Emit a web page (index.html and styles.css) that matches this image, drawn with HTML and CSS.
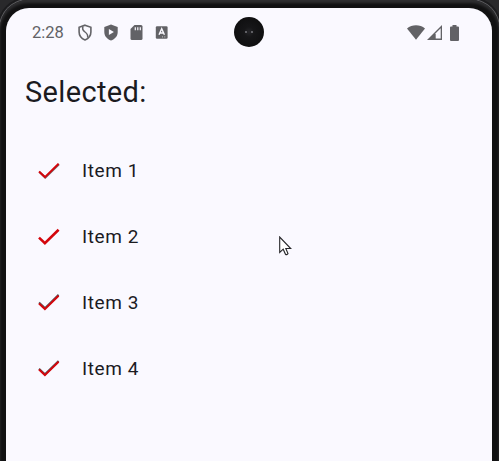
FILE: index.html
```html
<!DOCTYPE html>
<html lang="en">
<head>
<meta charset="utf-8">
<title>Selected</title>
<link rel="stylesheet" href="styles.css">
</head>
<body>
<div class="phone">
  <div class="screen">
    <header class="status">
      <span class="clock">2:28</span>
      <div class="notices">
        <svg width="14" height="17" viewBox="0 0 14 17"><path d="M7 1.200 12.900 3.300V8c0 3.600-2.400 6.500-5.900 7.900C3.500 14.500 1.100 11.600 1.100 8V3.300Z" fill="none" stroke="#646468" stroke-width="1.600"/><path d="M5 2.500C3.800 5.500 5 6.600 7 8s3.200 3 2.600 5.600" fill="none" stroke="#646468" stroke-width="1.500"/></svg>
        <svg width="14" height="17" viewBox="0 0 14 17"><path d="M7 .4 13.700 2.900V8c0 4.200-2.800 7.200-6.700 8.500C3.100 15.200.3 12.200.3 8V2.900Z" fill="#626266"/><path d="M4.900 4.900v6.200l5-3.100Z" fill="#faf9ff"/></svg>
        <svg width="13" height="15" viewBox="0 0 13 15"><path d="M4.500 0h6.500q1.500 0 1.500 1.500v12Q12.500 15 11 15H2Q.5 15 .5 13.500V4Z" fill="#626266"/><path d="M5.300 2.200v3M7.800 2.200v3M10.300 2.200v3" stroke="#faf9ff" stroke-width="1.200"/></svg>
        <svg width="13" height="13" viewBox="0 0 13 13"><rect x=".8" y=".2" width="11.800" height="12.500" rx="1.200" fill="#626266"/><path d="M4 8.700 6.700 2.800 9.400 8.700M5 7h3.400" fill="none" stroke="#faf9ff" stroke-width="1.400"/><path d="M7 10.900h1M9.300 10.900h1" stroke="#c8c8cc"/></svg>
      </div>
      <div class="system">
        <svg width="18" height="15" viewBox="0 0 18 15"><path d="M0 3.500C5-.9 13-.9 18 3.500L9 14.700Z" fill="#626266"/></svg>
        <svg width="15" height="15" viewBox="0 0 15 15"><path d="M0 15 15 0V15Z" fill="#626266"/><path d="M8.700 8.200 13.700 3.200V13.600h-5Z" fill="#faf9ff"/></svg>
        <svg class="battery" width="9" height="16" viewBox="0 0 9 16"><path d="M2.500 0h4v1.600H8q1 0 1 1V15q0 1-1 1H1q-1 0-1-1V2.600q0-1 1-1h1.500Z" fill="#626266"/></svg>
      </div>
      <div class="camera"><i></i><i></i></div>
    </header>
    <h1>Selected:</h1>
    <ul>
      <li><svg class="check" width="22" height="17" viewBox="0 0 22 17"><path d="m1 9.600 5.900 5.500L20.600 1.800" transform="translate(.4 .5)" stroke="#756a6e"/><path d="m1 9.600 5.900 5.500L20.600 1.800" stroke="#d4060c"/></svg><span>Item 1</span></li>
      <li><svg class="check bold" width="22" height="17" viewBox="0 0 22 17"><path d="m1 9.600 5.900 5.500L20.600 1.800" stroke="#d4060c"/></svg><span>Item 2</span></li>
      <li><svg class="check" width="22" height="17" viewBox="0 0 22 17"><path d="m1 9.600 5.900 5.500L20.600 1.800" transform="translate(0 -1)" stroke="#55575a"/><path d="m1 9.600 5.900 5.500L20.600 1.800" stroke="#d4060c"/></svg><span>Item 3</span></li>
      <li><svg class="check" width="22" height="17" viewBox="0 0 22 17"><path d="m1 9.600 5.900 5.500L20.600 1.800" transform="translate(0 -.8)" stroke="#55575a"/><path d="m1 9.600 5.900 5.500L20.600 1.800" stroke="#d4060c"/></svg><span>Item 4</span></li>
    </ul>
  </div>
</div>
<svg class="pointer" width="13" height="20" viewBox="0 0 13 20"><path d="M.7 1v15.500l3.500-3.300 2.300 5.100q1.200 1 2.500-.7L6.800 12.500h4.900Z" fill="#fff" stroke="#252528" stroke-width="1.100"/></svg>
</body>
</html>
```
FILE: styles.css
```css
* { box-sizing: border-box; }
body {
  margin: 0;
  height: 461px;
  overflow: hidden;
  background: #29292b;
  font-family: Roboto, sans-serif;
  color: #1b1b1f;
}
svg { display: block; flex: none; }
.phone {
  height: 461px;
  padding: 8px 7px 0 6px;
  background: #111112;
  border-radius: 28px 28px 0 0;
  box-shadow: 0 0 0 1px #5c5c5f, 0 0 0 3px #1c1c1e, inset 0 3px 3px #303032;
}
.screen {
  height: 453px;
  background: #faf9ff;
  border-radius: 23px 23px 0 0;
}
.status {
  position: relative;
  display: flex;
  align-items: center;
  height: 49px;
  padding: 0 33px 0 26px;
}
.clock {
  width: 45.5px;
  font-size: 16.5px;
  color: #626266;
}
.notices { display: flex; align-items: center; gap: 12.3px; }
.system { display: flex; align-items: center; gap: 2px; margin-left: auto; }
.battery { margin-left: 6px; }
.camera {
  position: absolute;
  left: 228px;
  top: 9px;
  width: 30px;
  height: 30px;
  display: flex;
  align-items: center;
  justify-content: center;
  gap: 4px;
  border-radius: 50%;
  background: radial-gradient(circle, #26262a 0, #161618 5px, #141416 8px, #101011 14px);
}
.camera i { width: 2px; height: 2px; border-radius: 50%; background: #77777c; }
h1 {
  margin: 10px 0 0 19px;
  font-size: 29px;
  line-height: 50px;
  font-weight: 400;
  letter-spacing: .35px;
}
ul { list-style: none; margin: 20px 0 0; padding: 0 0 0 32px; }
li { display: flex; align-items: center; height: 66px; font-size: 19px; letter-spacing: .6px; }
li span { margin-left: 22px; }
.check path { fill: none; stroke-width: 2; }
.check.bold path { stroke-width: 2.6; }
.pointer { position: absolute; left: 279px; top: 236px; }
```
